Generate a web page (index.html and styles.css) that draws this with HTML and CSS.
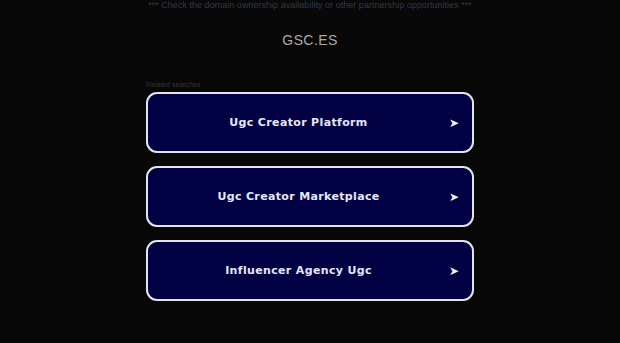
FILE: index.html
```html
<!DOCTYPE html>
<html>
<head>
<meta charset="utf-8">
<link rel="stylesheet" href="styles.css">
</head>
<body>
<div class="page">
  <div class="notice">*** Check the domain ownership availability or other partnership opportunities ***</div>
  <h1 class="domain">GSC.ES</h1>
  <div class="related">
    <div class="related-label">Related searches</div>
    <a class="search-btn" href="#"><span class="search-text">Ugc Creator Platform</span><span class="arrow">&#10148;</span></a>
    <a class="search-btn" href="#"><span class="search-text">Ugc Creator Marketplace</span><span class="arrow">&#10148;</span></a>
    <a class="search-btn" href="#"><span class="search-text">Influencer Agency Ugc</span><span class="arrow">&#10148;</span></a>
  </div>
</div>
</body>
</html>
```
FILE: styles.css
```css
html, body {
  margin: 0;
  padding: 0;
  background: #080808;
}
.page {
  width: 620px;
  height: 343px;
  display: flex;
  flex-direction: column;
  align-items: center;
  font-family: "Liberation Sans", Arial, sans-serif;
}
.notice {
  font-size: 9px;
  line-height: 11px;
  color: #2c3a4c;
  letter-spacing: 0.03px;
  text-align: center;
  white-space: nowrap;
}
.domain {
  margin: 21px 0 0 0;
  font-size: 14px;
  line-height: 16px;
  font-weight: normal;
  color: #a8a8a8;
  letter-spacing: 0.4px;
}
.related {
  width: 328px;
  margin-top: 33px;
  display: flex;
  flex-direction: column;
  gap: 13px;
}
.related-label {
  font-size: 7px;
  line-height: 8px;
  color: #333;
  margin-bottom: -10px;
}
.search-btn {
  position: relative;
  display: flex;
  align-items: center;
  justify-content: center;
  height: 57px;
  padding-right: 23px;
  border: 2px solid #e4e4ec;
  border-radius: 11px;
  background: #010143;
  text-decoration: none;
}
.search-text {
  font-family: "DejaVu Sans", Verdana, sans-serif;
  font-weight: bold;
  font-size: 11px;
  color: #e6e6fa;
  letter-spacing: 0.35px;
}
.arrow {
  position: absolute;
  right: 13px;
  top: 50%;
  transform: translateY(-50%);
  font-family: "DejaVu Sans", sans-serif;
  font-size: 12px;
  color: #f0f0ff;
}
```
